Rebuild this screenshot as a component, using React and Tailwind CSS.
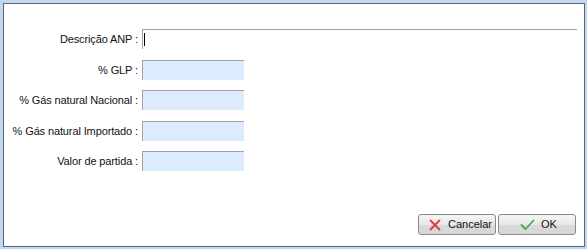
import React from "react";

function Row({ label, children, className = "" }) {
  return (
    <div className={`flex items-center h-[20px] ${className}`}>
      <div className="w-[135px] text-right pr-[1px] whitespace-nowrap tracking-[-0.12px]">{label}</div>
      <div className="ml-[3px] flex-1 h-full flex">{children}</div>
    </div>
  );
}

function BlueInput() {
  return <div className="w-[102px] h-[20px] bg-[#dcebfd] border-t border-l border-[#a3a3a3]" />;
}

export default function App() {
  return (
    <div
      className="w-[587px] h-[249px] pt-[3px] pl-[3px] pr-[2px] pb-[2px] bg-[#c2d8f1]"
      style={{ fontFamily: '"Liberation Sans", Arial, sans-serif' }}
    >
      <div className="h-full bg-white border-t border-l border-[#5f6670] border-r border-b border-r-[#55677f] border-b-[#55677f] flex flex-col text-[11px] text-[#111]">
        <Row label="Descrição ANP :" className="mt-[25px]">
          <div className="flex-1 mr-[7px] h-[20px] bg-white border-t border-l border-[#a0a0a0] relative">
            <div className="absolute left-[1px] top-[3px] w-[1px] h-[13px] bg-black" />
          </div>
        </Row>
        <Row label="% GLP :" className="mt-[11px]">
          <BlueInput />
        </Row>
        <Row label="% Gás natural Nacional :" className="mt-[10px]">
          <BlueInput />
        </Row>
        <Row label="% Gás natural Importado :" className="mt-[11px]">
          <BlueInput />
        </Row>
        <Row label="Valor de partida :" className="mt-[10px]">
          <BlueInput />
        </Row>
        <div className="flex justify-end gap-[2px] mt-[43px] pr-[8px]">
          <button className="w-[78px] h-[21px] rounded-[3px] border border-[#8a8a8a] bg-[linear-gradient(#f6f6f6,#e8e8e8_50%,#dadada_51%,#d6d6d6)] flex items-center pl-[10px] text-[11px] text-[#111]">
            <svg width="12" height="12" viewBox="0 0 12 12" className="mr-[7px]">
              <path d="M1.5 1.5 L10.5 10.5 M10.5 1.5 L1.5 10.5" stroke="#e0393e" strokeWidth="1.8" strokeLinecap="round" fill="none" />
            </svg>
            Cancelar
          </button>
          <button className="w-[78px] h-[21px] rounded-[3px] border border-[#8a8a8a] bg-[linear-gradient(#f6f6f6,#e8e8e8_50%,#dadada_51%,#d6d6d6)] flex items-center pl-[21px] text-[11px] text-[#111]">
            <svg width="15" height="12" viewBox="0 0 15 12" className="mr-[6px]">
              <path d="M1.5 6 L5.5 10 L13.5 1.5" stroke="#3fb04a" strokeWidth="1.8" strokeLinecap="round" strokeLinejoin="round" fill="none" />
            </svg>
            OK
          </button>
        </div>
      </div>
    </div>
  );
}
